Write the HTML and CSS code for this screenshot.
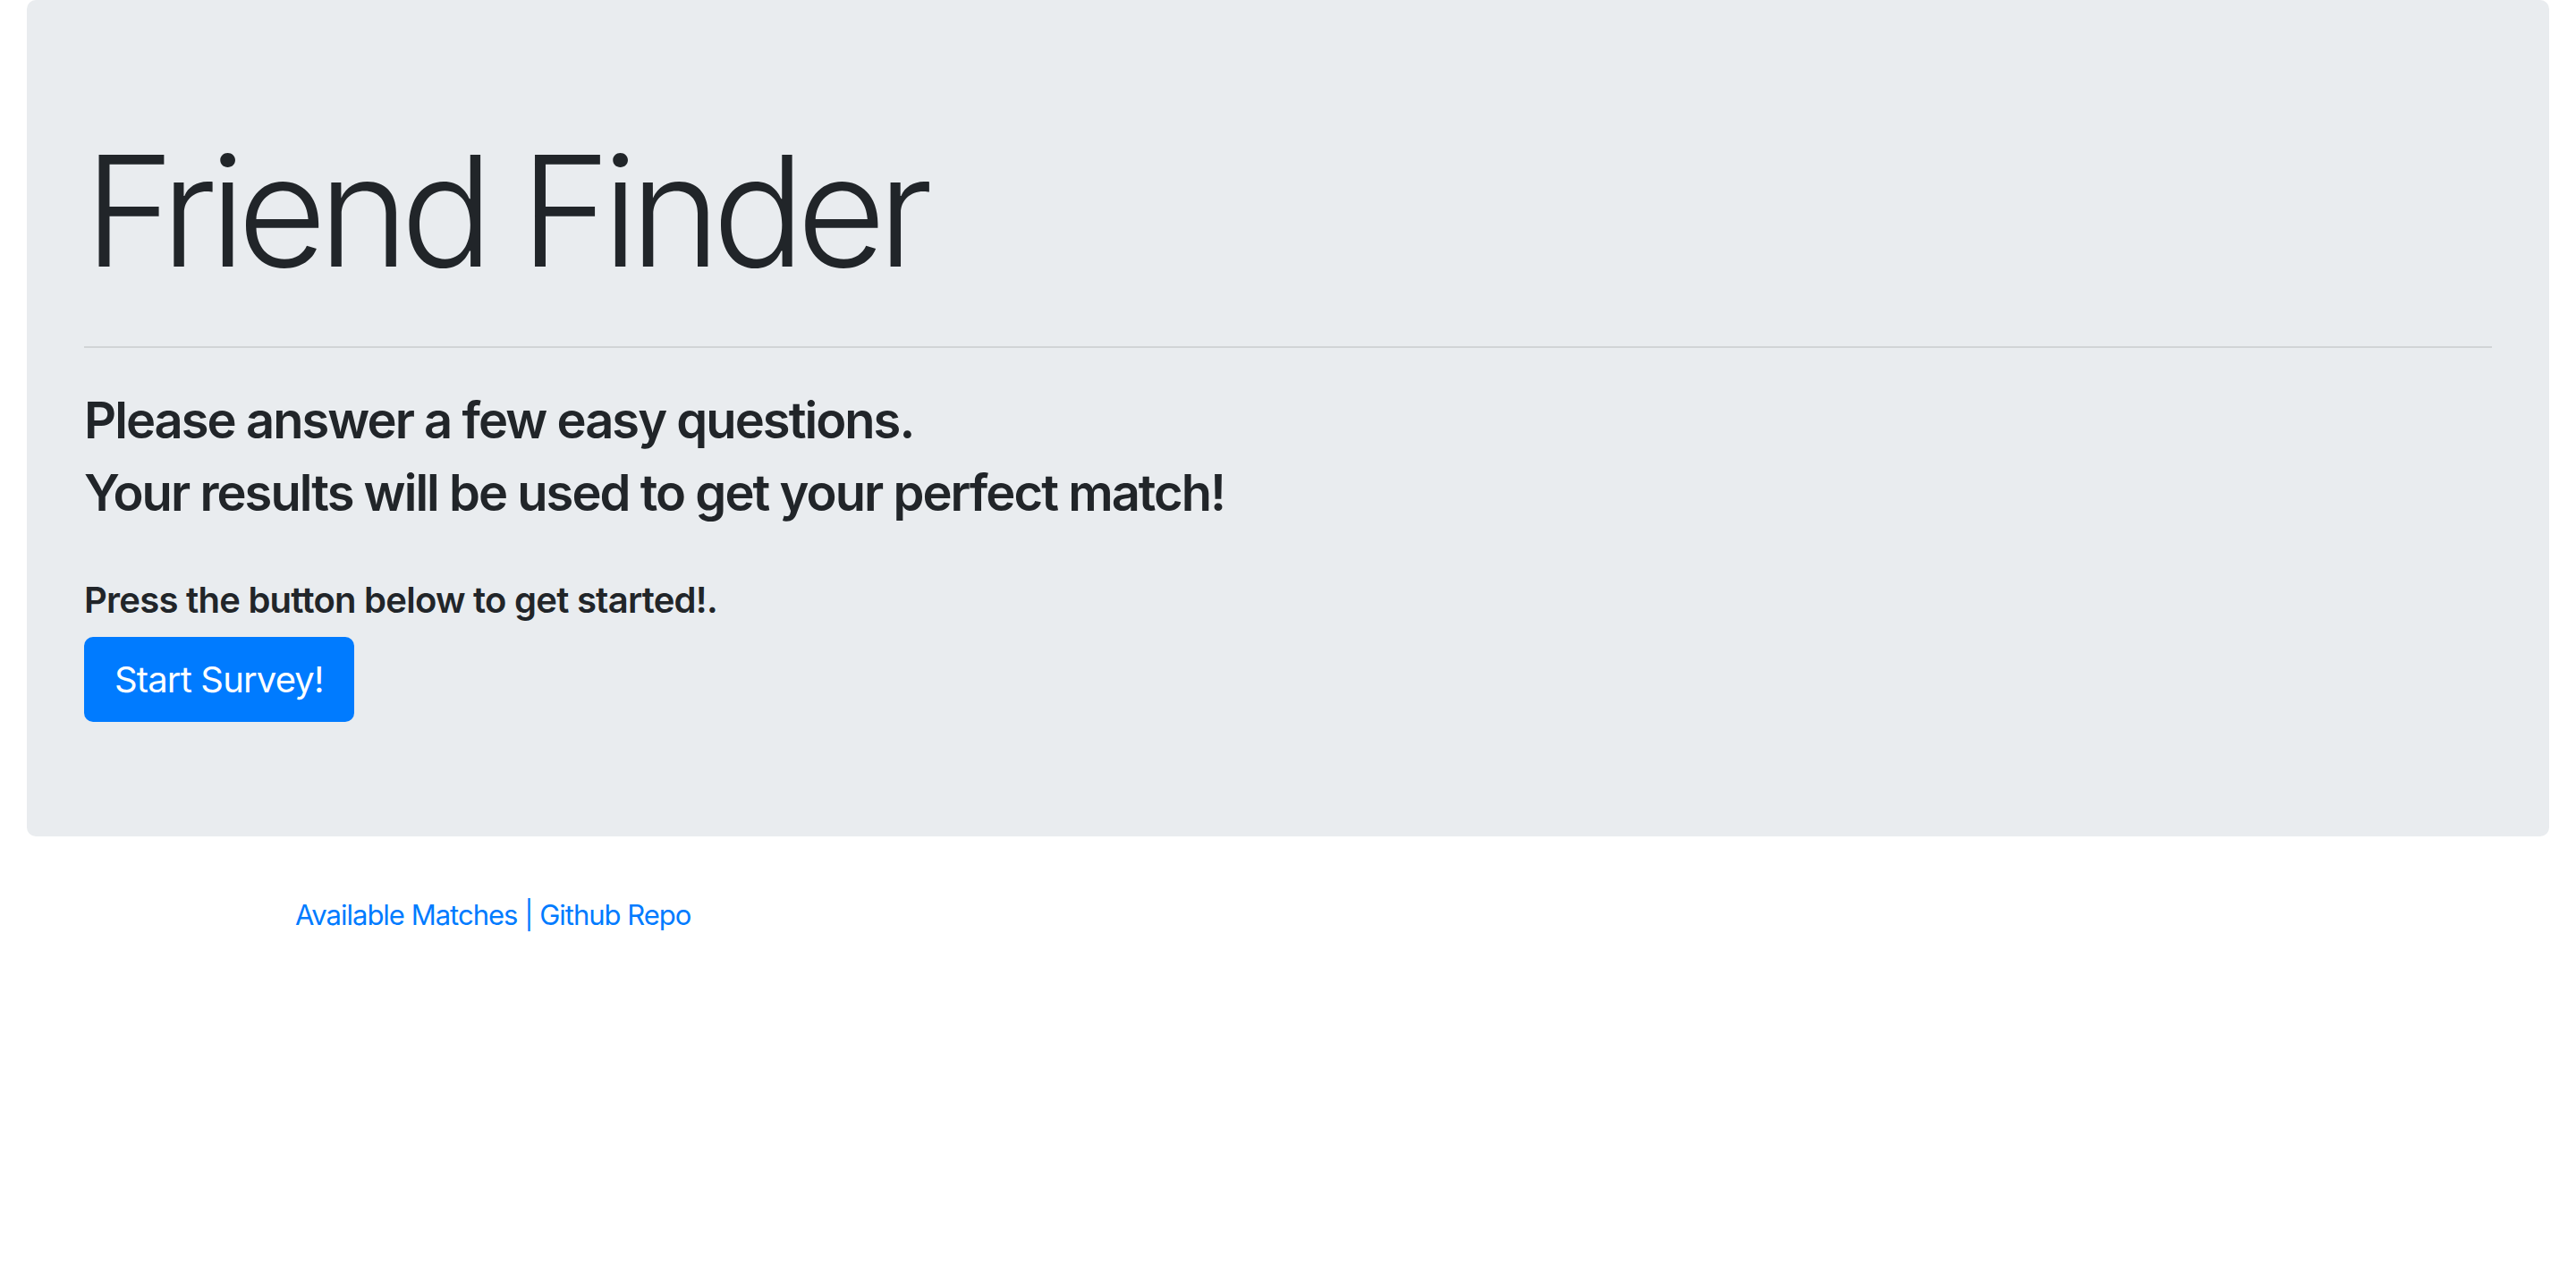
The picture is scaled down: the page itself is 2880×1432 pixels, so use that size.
FILE: index.html
```html
<!DOCTYPE html>
<html lang="en">
<head>
<meta charset="utf-8">
<title>Friend Finder</title>
<link rel="stylesheet" href="styles.css">
</head>
<body>
<div class="page">
  <div class="jumbotron">
    <h1 class="title">Friend Finder</h1>
    <hr class="divider">
    <h3 class="intro">Please answer a few easy questions.</h3>
    <h3 class="intro">Your results will be used to get your perfect match!</h3>
    <h5 class="prompt">Press the button below to get started!.</h5>
    <a class="btn-start" href="#">Start Survey!</a>
  </div>
</div>
<footer class="footer">
  <p class="footer-links"><a href="#">Available Matches</a><span class="sep"> | </span><a href="#">Github Repo</a></p>
</footer>
</body>
</html>
```

FILE: styles.css
```css
html, body {
  margin: 0;
  padding: 0;
  background: #ffffff;
}
body {
  font-family: Inter, "Noto Sans", "Liberation Sans", sans-serif;
  font-size: 32px;
  line-height: 1.5;
  color: #212529;
}
.page {
  padding: 0 30px;
}
.jumbotron {
  background: #e9ecef;
  border-radius: 10px;
  padding: 132px 64px 128px;
  margin-bottom: 64px;
}
.title {
  font-size: 172px;
  font-weight: 300;
  line-height: 206px;
  letter-spacing: -9.2px;
  margin: 0;
}
.divider {
  border: 0;
  border-top: 2px solid rgba(0, 0, 0, 0.1);
  margin: 49px 0 47px;
  height: 0;
}
.intro {
  font-size: 56px;
  font-weight: 600;
  line-height: 68px;
  letter-spacing: -1.95px;
  margin: 0 0 13px;
}
.prompt {
  font-size: 40px;
  font-weight: 600;
  line-height: 48px;
  letter-spacing: -0.75px;
  margin: 62px 0 17px;
}
.btn-start {
  display: inline-block;
  background: #007bff;
  color: #ffffff;
  border: 2px solid #007bff;
  border-radius: 10px;
  padding: 16px 32px;
  font-size: 40px;
  line-height: 59px;
  font-weight: 400;
  letter-spacing: -0.85px;
  text-decoration: none;
  vertical-align: top;
}
.footer {
  box-sizing: border-box;
  max-width: 2280px;
  margin: 0 auto;
  padding: 0 30px;
}
.footer-links {
  margin: 0;
  font-size: 31px;
  line-height: 48px;
  letter-spacing: -1px;
  color: #007bff;
}
.footer-links a {
  color: #007bff;
  text-decoration: none;
}
```
